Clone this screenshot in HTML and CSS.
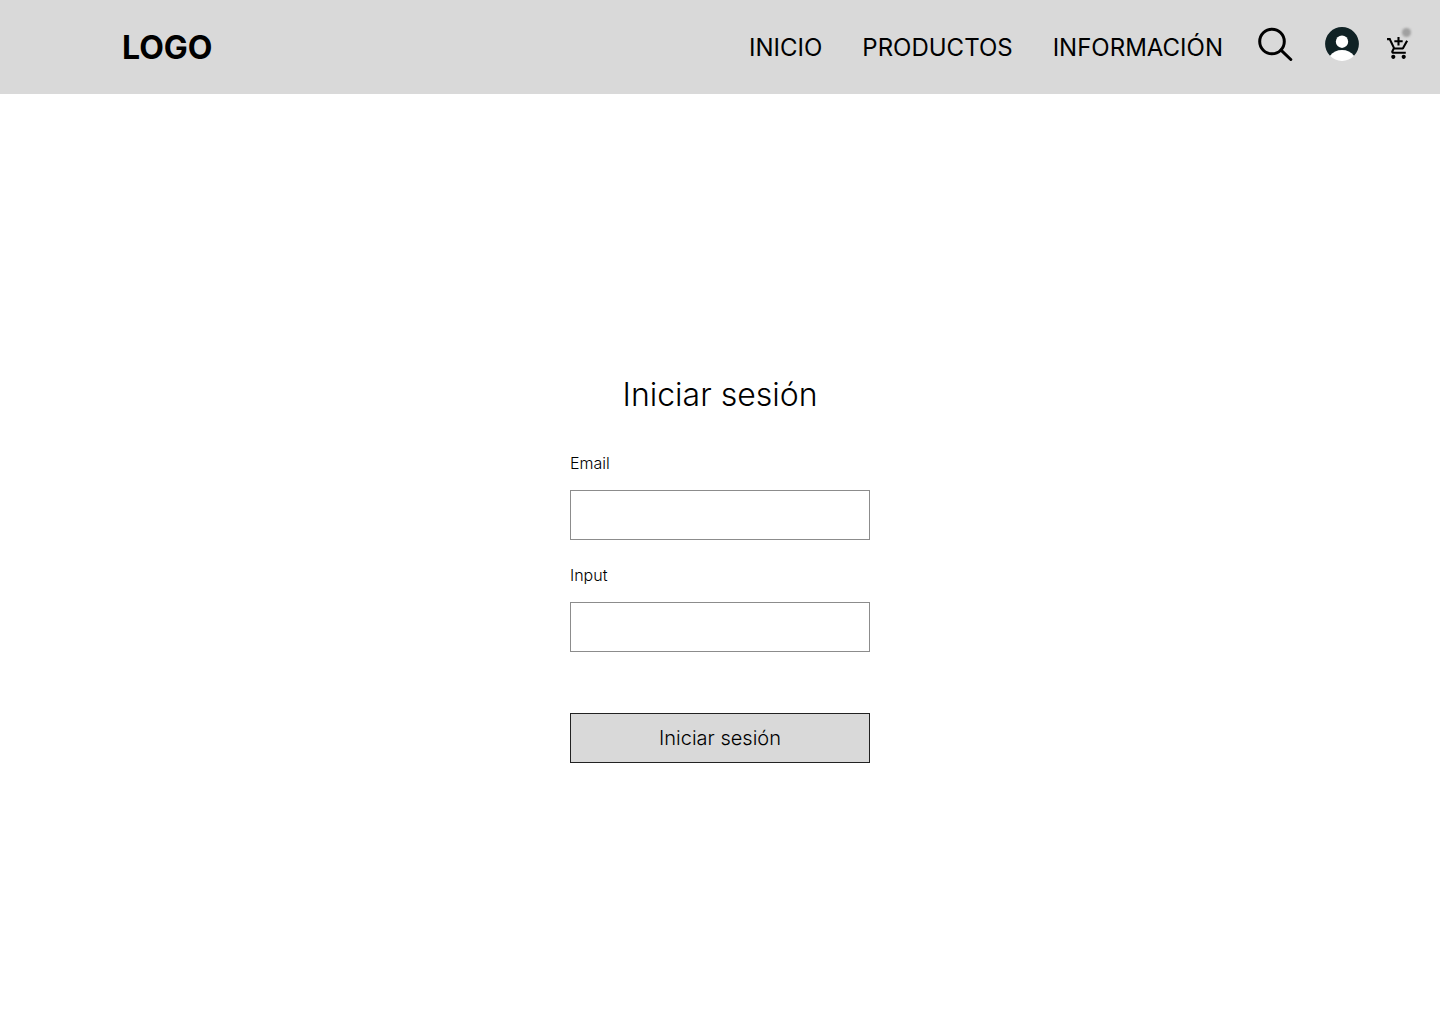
FILE: index.html
```html
<!DOCTYPE html>
<html lang="es">
<head>
  <meta charset="utf-8">
  <meta name="viewport" content="width=device-width, initial-scale=1">
  <title>Iniciar sesión</title>
  <link rel="stylesheet" href="styles.css">
</head>
<body>
  <header class="header">
    <a class="logo" href="#">LOGO</a>
    <nav class="nav">
      <a href="#">INICIO</a>
      <a href="#">PRODUCTOS</a>
      <a href="#">INFORMACIÓN</a>
    </nav>
    <div class="actions">
      <button class="icon-button" type="button" aria-label="Buscar">
        <svg width="36" height="34" viewBox="0 0 36 34" fill="none" stroke="#000" stroke-width="3" stroke-linecap="round">
          <circle cx="15" cy="14.500" r="12.300"/>
          <path d="M24 23.200 33.800 32.500"/>
        </svg>
      </button>
      <a class="icon-button" href="#" aria-label="Cuenta">
        <svg width="34" height="34" viewBox="0 0 34 34">
          <path fill="#102225" d="M5 28.800A16.900 16.900 0 1 1 29 28.800z"/>
          <circle cx="17" cy="14.700" r="6.200" fill="#fff"/>
          <path fill="#fff" d="M5 28.800C8 25 12 23 17 23s9 2 12 5.800A16.900 16.900 0 0 1 17 34 16.900 16.900 0 0 1 5 28.800z"/>
        </svg>
      </a>
      <a class="icon-button cart" href="#" aria-label="Carrito">
        <svg width="25" height="25" viewBox="0 0 24 24">
          <path d="M11 9h2V6h3V4h-3V1h-2v3H8v2h3v3zm-4 9c-1.100 0-1.990.9-1.990 2S5.900 22 7 22s2-.9 2-2-.9-2-2-2zm10 0c-1.100 0-1.990.9-1.990 2s.89 2 1.990 2 2-.9 2-2-.9-2-2-2zm-9.830-3.250l.03-.12.9-1.630h7.450c.75 0 1.410-.41 1.750-1.030l3.860-7.010L19.420 4h-.01l-1.100 2-2.760 5H8.530l-.13-.27L6.160 6l-.95-2-.94-2H1v2h2l3.600 7.590-1.350 2.450c-.16.28-.25.61-.25.96 0 1.100.9 2 2 2h12v-2H7.420c-.13 0-.25-.11-.25-.25z"/>
        </svg>
        <span class="badge"></span>
      </a>
    </div>
  </header>

  <main class="main">
    <form class="login">
      <h1 class="title">Iniciar sesión</h1>
      <div class="field">
        <label for="email">Email</label>
        <input id="email" name="email" type="email">
      </div>
      <div class="field">
        <label for="password">Input</label>
        <input id="password" name="password" type="password">
      </div>
      <button class="submit" type="submit">Iniciar sesión</button>
    </form>
  </main>
</body>
</html>
```

FILE: styles.css
```css
* {
  box-sizing: border-box;
}

body {
  margin: 0;
  background: #fff;
  color: #000;
  font-family: Inter, "Liberation Sans", sans-serif;
}

a {
  color: inherit;
  text-decoration: none;
}

.header {
  display: flex;
  align-items: center;
  min-height: 94px;
  padding: 2px 29px 0 122px;
  background: #d9d9d9;
}

.logo {
  margin-right: auto;
  font-size: 32px;
  font-weight: 700;
  line-height: 40px;
}

.nav {
  display: flex;
  gap: 40px;
  font-size: 24px;
  line-height: 30px;
}

.actions {
  display: flex;
  align-items: center;
  gap: 32px;
  margin-left: 34px;
  padding-bottom: 8px;
}

.icon-button {
  display: flex;
  padding: 0;
  border: 0;
  background: none;
  cursor: pointer;
}

.cart {
  position: relative;
  align-items: flex-end;
  height: 34px;
  margin-left: -5px;
}

.badge {
  position: absolute;
  top: 1px;
  right: 0;
  width: 9px;
  height: 9px;
  border-radius: 50%;
  background: #a0a0a0;
  filter: blur(1px);
}

.main {
  display: flex;
  justify-content: center;
  padding: 281px 24px 80px;
}

.login {
  display: flex;
  flex-direction: column;
  gap: 25px;
  width: 100%;
  max-width: 300px;
}

.title {
  margin: 0 0 13px;
  font-size: 32px;
  font-weight: 300;
  line-height: 40px;
  text-align: center;
}

.field {
  display: flex;
  flex-direction: column;
  gap: 17px;
  font-size: 16px;
  font-weight: 300;
  line-height: 20px;
}

.field input {
  width: 100%;
  height: 50px;
  padding: 0 12px;
  border: 1px solid #8c8c8c;
  border-radius: 0;
  background: #fff;
  font: inherit;
}

.submit {
  height: 50px;
  margin-top: 36px;
  padding: 0;
  border: 1px solid #222;
  background: #d9d9d9;
  color: #000;
  font: 300 20px/24px Inter, "Liberation Sans", sans-serif;
  cursor: pointer;
}
```
